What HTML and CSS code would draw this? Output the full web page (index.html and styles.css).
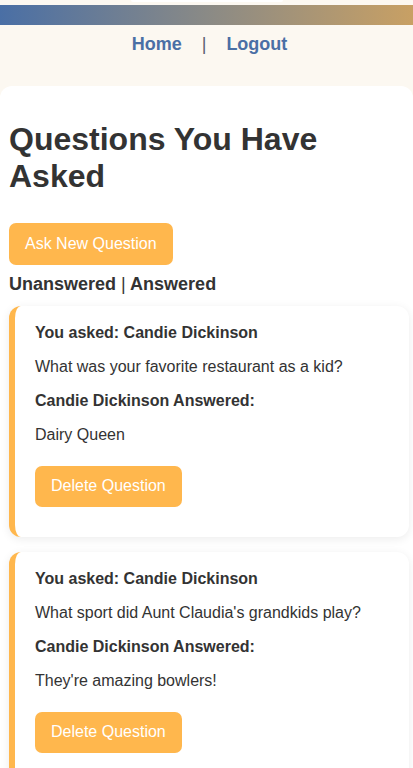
FILE: index.html
```html
<!DOCTYPE html>
<html lang="en">
<head>
<meta charset="utf-8">
<title>Questions You Have Asked</title>
<link rel="stylesheet" href="styles.css">
</head>
<body>
<div class="top-strip"><div class="nub"></div></div>
<div class="bar"></div>
<nav class="nav"><a class="nav-link" href="#">Home</a> <span class="nav-sep">|</span> <a class="nav-link" href="#">Logout</a></nav>
<main class="panel">
  <h1 class="title">Questions You Have Asked</h1>
  <button class="btn btn-ask">Ask New Question</button>
  <div class="tabs"><span class="tab">Unanswered</span> <span class="tab-sep">|</span> <span class="tab">Answered</span></div>

  <div class="card">
    <p class="label">You asked: Candie Dickinson</p>
    <p class="text">What was your favorite restaurant as a kid?</p>
    <p class="label">Candie Dickinson Answered:</p>
    <p class="text">Dairy Queen</p>
    <button class="btn btn-delete">Delete Question</button>
  </div>

  <div class="card">
    <p class="label">You asked: Candie Dickinson</p>
    <p class="text">What sport did Aunt Claudia's grandkids play?</p>
    <p class="label">Candie Dickinson Answered:</p>
    <p class="text">They're amazing bowlers!</p>
    <button class="btn btn-delete">Delete Question</button>
  </div>
</main>
</body>
</html>
```
FILE: styles.css
```css
* { box-sizing: border-box; }

html, body {
  margin: 0;
  padding: 0;
}

body {
  background: #fcf8f1;
  font-family: "Liberation Sans", Arial, sans-serif;
  color: #333333;
}

.top-strip {
  height: 5px;
  display: flex;
  justify-content: center;
}

.nub {
  width: 152px;
  height: 2px;
  background: #ffffff;
  border-radius: 0 0 6px 6px;
}

.bar {
  height: 20px;
  background: linear-gradient(90deg, #4a6fa5 0%, #8a8a86 50%, #c8a064 100%);
}

.nav {
  padding: 9px 0 31px 6px;
  text-align: center;
  font-size: 18px;
  font-weight: bold;
}

.nav-link {
  color: #4a6fa5;
  text-decoration: none;
  margin: 0 15px;
}

.nav-sep {
  color: #5a6070;
  font-weight: normal;
}

.panel {
  background: #ffffff;
  border-radius: 12px 12px 0 0;
  padding: 14px 4px 20px 9px;
  min-height: 700px;
}

.title {
  font-size: 32px;
  font-weight: bold;
  margin: 21.4px 0 27.4px;
  color: #333333;
}

.btn {
  font-family: "Liberation Sans", Arial, sans-serif;
  font-size: 16px;
  line-height: 18px;
  color: #ffffff;
  background: #ffb74d;
  border: none;
  border-radius: 7px;
  padding: 12px 16px;
  display: block;
  cursor: pointer;
}

.btn-ask {
  margin: 0;
}

.tabs {
  margin-top: 9px;
  font-size: 18px;
  font-weight: bold;
  color: #333333;
}

.tab-sep {
  font-weight: normal;
}

.card {
  margin-top: 11px;
  margin-bottom: 15px;
  background: #ffffff;
  border-left: 6px solid #ffb74d;
  border-radius: 12px;
  padding: 18px 20px 30px;
  box-shadow: 0 2px 10px rgba(0, 0, 0, 0.08);
}

.card + .card {
  margin-top: 0;
}

.card p {
  font-size: 16px;
  margin: 0 0 16px;
  color: #333333;
}

.label {
  font-weight: bold;
}

.btn-delete {
  margin-top: 22px;
  padding: 11.5px 16px;
}
```
